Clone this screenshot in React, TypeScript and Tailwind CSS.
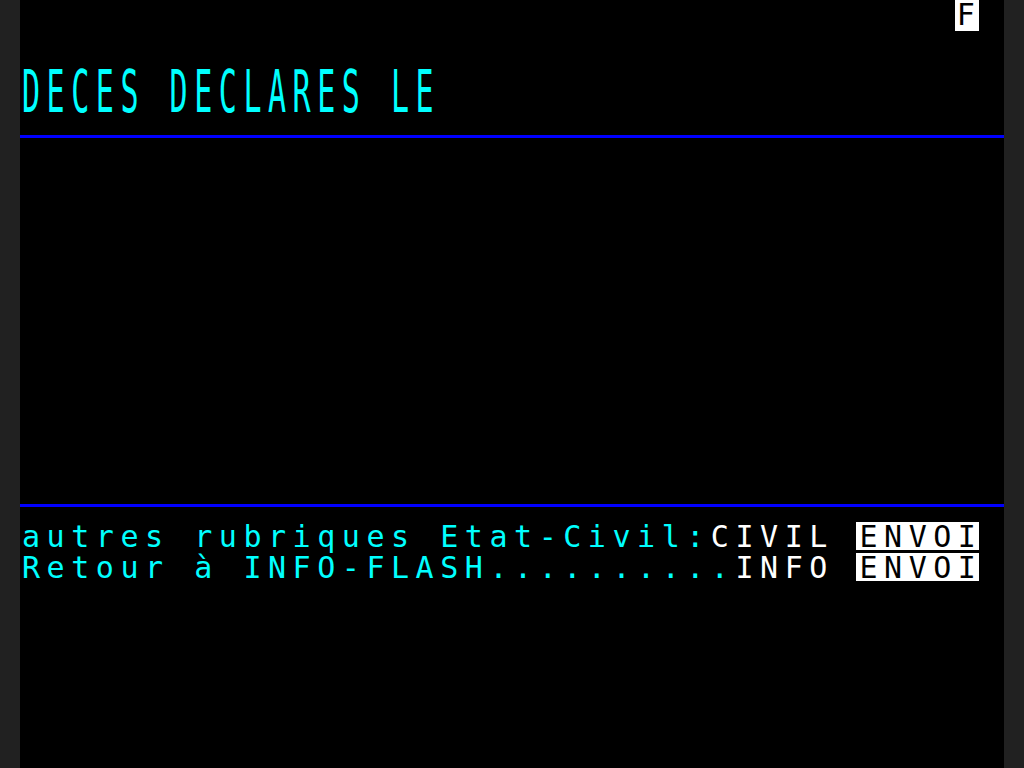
import React from "react";

const TXT =
  "font-['DejaVu_Sans_Mono',monospace] text-[30px] tracking-[6.54px] leading-[30.72px] whitespace-pre";

export default function App() {
  return (
    <div className="flex h-[768px] w-[1024px] bg-[#212121] overflow-hidden">
      <div className="w-[20px] shrink-0 bg-[#212121]" />
      <div className={`flex w-[984px] shrink-0 flex-col bg-black ${TXT}`}>
        {/* row 0 status */}
        <div className="h-[30.72px] pl-[934.8px]">
          <span className="inline-block h-[30.72px] w-[24.6px] bg-white pl-[2px] text-black align-top">F</span>
        </div>
        {/* row 1 */}
        <div className="h-[30.72px]" />
        {/* rows 2-3 title, double height */}
        <div className="h-[61.44px] pl-[2px] pt-[2px]">
          <div className="h-[30.72px] origin-top scale-y-[1.96] text-[#00ffff]">DECES DECLARES LE</div>
        </div>
        {/* row 4 line */}
        <div className="h-[30.72px] pt-[12px]">
          <div className="h-[3px] bg-[#0000ff]" />
        </div>
        {/* rows 5-15 */}
        <div className="h-[337.92px]" />
        {/* row 16 line */}
        <div className="h-[30.72px] pt-[12.5px]">
          <div className="h-[3px] bg-[#0000ff]" />
        </div>
        {/* row 17 */}
        <div className="h-[30.72px] pl-[2px]">
          <span className="text-[#00ffff]">autres rubriques Etat-Civil:</span>
          <span className="text-white">CIVIL </span>
          <span className="-ml-[2px] inline-block h-[28px] w-[123px] overflow-hidden bg-white pl-[3px] text-black align-top">ENVOI</span>
        </div>
        {/* row 18 */}
        <div className="h-[30.72px] pl-[2px]">
          <span className="text-[#00ffff]">Retour à INFO-FLASH..........</span>
          <span className="text-white">INFO </span>
          <span className="-ml-[2px] inline-block h-[28px] w-[123px] overflow-hidden bg-white pl-[3px] text-black align-top">ENVOI</span>
        </div>
        <div className="flex-1" />
      </div>
      <div className="w-[20px] shrink-0 bg-[#212121]" />
    </div>
  );
}
